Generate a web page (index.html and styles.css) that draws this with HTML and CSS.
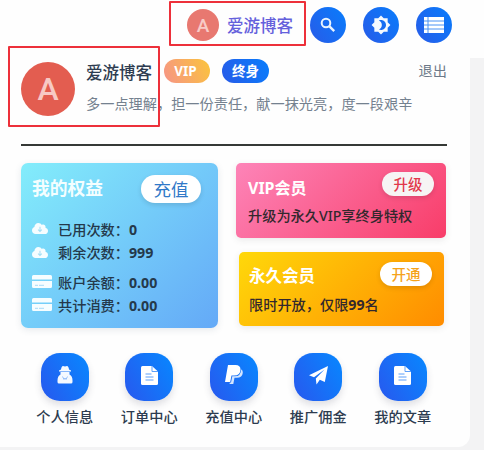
FILE: index.html
```html
<!DOCTYPE html>
<html lang="zh-CN">
<head>
<meta charset="utf-8">
<title>爱游博客</title>
<link rel="stylesheet" href="styles.css">
</head>
<body>
<svg class="defs" width="0" height="0" aria-hidden="true">
  <symbol id="cloud" viewBox="0 0 640 512"><path fill="currentColor" d="M537 227c4-11 7-23 7-35 0-53-43-96-96-96-20 0-38 6-53 16C367 64 315 32 256 32c-88 0-160 72-160 160v8C40 220 0 273 0 336c0 80 64 144 144 144h368c71 0 128-57 128-128 0-62-44-114-103-125z"/><path d="M320 190v180M245 300l75 75 75-75" fill="none" stroke="#a5dff5" stroke-width="42"/></symbol>
  <symbol id="card" viewBox="0 0 20 14"><path fill="currentColor" d="M1.5 0h17Q20 0 20 1.5V4.500H0V1.5Q0 0 1.500 0zM0 6h20v5.500q0 1.500-1.500 1.500h-17Q0 13 0 11.500z"/><path d="M3 10.300h3M7 10.300h5" stroke="#a8daf8" stroke-width="1"/></symbol>
  <symbol id="doc" viewBox="0 0 17 19"><path fill="currentColor" d="M1.500 0H11l6 5.500v12q0 1.500-1.500 1.500h-14Q0 19 0 17.500v-16Q0 0 1.500 0z"/><path d="M11 0v5.500h6M4.500 8h6M4.500 11h8M4.500 14h8" fill="none" stroke="#5c9ffa" stroke-width="1"/></symbol>
</svg>

<header class="topbar">
  <a class="account"><span class="avatar avatar-small">A</span><span class="account-name">爱游博客</span></a>
  <button class="round"><svg width="16" height="16" viewBox="0 0 16 16"><circle cx="6" cy="6" r="4.300" fill="none" stroke="#e9f4ff" stroke-width="2"/><path d="M9.200 9.200l5 5" stroke="#e9f4ff" stroke-width="2.400"/></svg></button>
  <button class="round"><svg width="20" height="20" viewBox="0 0 24 24"><path fill="#f4f9ff" d="M20 8.690V4h-4.690L12 .690 8.690 4H4v4.690L.690 12 4 15.310V20h4.690L12 23.310 15.310 20H20v-4.690L23.310 12zM12 18c-.890 0-1.740-.200-2.500-.550C11.560 16.500 13 14.420 13 12s-1.440-4.500-3.500-5.450C10.260 6.200 11.110 6 12 6c3.310 0 6 2.690 6 6s-2.690 6-6 6z"/></svg></button>
  <button class="round"><svg width="20" height="16" viewBox="0 0 20 16"><path fill="#fff" d="M0 0h20v16H0z"/><path d="M0 4h20M0 8h20M0 12h20M4 0v16" stroke="#4b92f4" stroke-width="1"/></svg></button>
</header>

<main class="panel">
  <section class="profile">
    <span class="avatar avatar-large">A</span>
    <div class="info">
      <div class="identity"><strong class="name">爱游博客</strong><span class="tag tag-vip">VIP</span><span class="tag tag-life">终身</span><a class="logout">退出</a></div>
      <p class="motto">多一点理解，担一份责任，献一抹光亮，度一段艰辛</p>
    </div>
  </section>

  <section class="cards">
    <article class="benefits">
      <div class="card-head"><h2>我的权益</h2><button class="pill recharge">充值</button></div>
      <ul class="stats">
        <li><svg class="cloud"><use href="#cloud"/></svg><span>已用次数：<b>0</b></span></li>
        <li><svg class="cloud"><use href="#cloud"/></svg><span>剩余次数：<b>999</b></span></li>
      </ul>
      <ul class="stats">
        <li><svg class="bank"><use href="#card"/></svg><span>账户余额：<b>0.00</b></span></li>
        <li><svg class="bank"><use href="#card"/></svg><span>共计消费：<b>0.00</b></span></li>
      </ul>
    </article>
    <div class="offers">
      <article class="offer pink">
        <div class="card-head"><h3>VIP会员</h3><button class="pill upgrade">升级</button></div>
        <p>升级为永久VIP享终身特权</p>
      </article>
      <article class="offer gold">
        <div class="card-head"><h3>永久会员</h3><button class="pill open">开通</button></div>
        <p>限时开放，仅限<b>99</b>名</p>
      </article>
    </div>
  </section>

  <nav class="shortcuts">
    <a><span class="tile"><svg width="16" height="18" viewBox="0 0 16 18"><path fill="#f4f9ff" d="M4 3.500Q4.500 0 6 0l2 .600L10 0q1.500 0 2 3.500l2 1v1H2v-1zM3.500 6h9v2.500q3 1.500 3 6V16q0 1.500-1.500 1.500H2Q.500 17.500.500 16v-1.500q0-4.500 3-6z"/><path d="M5.500 10.500l1.500 3 1-1.500 1 1.500 1.500-3" fill="none" stroke="#7eb0f6" stroke-width=".8"/></svg></span>个人信息</a>
    <a><span class="tile"><svg width="17" height="19"><use href="#doc"/></svg></span>订单中心</a>
    <a><span class="tile"><svg width="18" height="20" viewBox="0 0 18 20"><path fill="#fff" d="M3 0h7.500q5 0 5 4.500 0 6-6.500 6H6.500L5.200 17H0z"/><path fill="#d4e6ff" d="M16.300 4.200q1.700 1 1.500 3.500-.500 5-6 5H9.500L8.300 19H4.500l.4-1.500H6L7.300 11.300h2.500q6 0 6.500-7.100z"/></svg></span>充值中心</a>
    <a><span class="tile"><svg width="19" height="19" viewBox="0 0 19 19"><path fill="#fff" d="M19 0l-3.200 16-5-2.200L7.500 18.500 6.800 12.500 15.500 3.500 5 11.300 0 9.300z"/></svg></span>推广佣金</a>
    <a><span class="tile"><svg width="17" height="19"><use href="#doc"/></svg></span>我的文章</a>
  </nav>
</main>
<i class="mark mark-top"></i>
<i class="mark mark-profile"></i>
</body>
</html>
```

FILE: styles.css
```css
* { box-sizing: border-box; }
body {
  margin: 0;
  height: 450px;
  overflow: hidden;
  position: relative;
  background: #f3f3f4;
  font-family: "Noto Sans", "Noto Sans CJK SC", sans-serif;
  font-size: 14.2px;
  color: #2d3c50;
}
.defs { position: absolute; }
h2, h3, p, ul { margin: 0; padding: 0; }
button { border: 0; padding: 0; font-family: inherit; }
svg { flex: none; }

.topbar {
  height: 58px;
  padding: 7px 32px 0 187px;
  display: flex;
  align-items: flex-start;
  background: #fefefe;
}
.account { display: flex; flex: none; align-items: center; height: 36px; width: 123px; gap: 8px; }
.account-name { font-size: 16.5px; font-weight: 500; color: #6460dc; white-space: nowrap; line-height: 24px; padding-top: 2px; }
.avatar {
  display: flex;
  align-items: center;
  justify-content: center;
  flex: none;
  border-radius: 50%;
  font-family: Roboto, sans-serif;
  font-weight: 500;
}
.avatar-small { width: 32px; height: 32px; background: #e87870; color: #f8cbc7; font-size: 19px; }
.avatar-large { width: 54px; height: 54px; background: #e35d50; color: #f7c9c4; font-size: 32px; }
.round {
  width: 36px;
  height: 36px;
  margin-right: 17px;
  border-radius: 50%;
  flex: none;
  display: flex;
  align-items: center;
  justify-content: center;
  background: linear-gradient(55deg, #285be8, #087dfc);
}

.panel {
  width: 470px;
  height: 389px;
  padding: 0 23px 0 21px;
  background: #fefefe;
  border-radius: 0 0 12px 0;
}
.profile { height: 88px; display: flex; gap: 11px; padding-top: 4px; border-bottom: 2px solid #353936; }
.info { flex: 1; margin-top: -3px; }
.identity { display: flex; align-items: center; height: 24px; }
.name { font-size: 16.5px; font-weight: 500; width: 78px; line-height: 24px; padding-top: 4px; white-space: nowrap; }
.tag {
  height: 24px;
  border-radius: 12px;
  color: #fff;
  font-size: 13.500px;
  font-weight: 700;
  line-height: 24px;
  text-align: center;
}
.tag-vip { width: 46px; padding-right: 3px; background: linear-gradient(65deg, #f69487, #fbc43b); }
.tag-life { width: 47px; margin-left: 12px; background: linear-gradient(65deg, #285be8, #087dfc); }
.logout { margin-left: auto; color: #6c7988; line-height: 20px; }
.motto { margin-top: 11px; line-height: 20px; color: #74818f; white-space: nowrap; }

.cards { display: flex; gap: 18px; margin-top: 17px; }
.benefits {
  width: 197px;
  height: 165px;
  border-radius: 7px;
  padding: 12px 17px 0 11px;
  color: #24394b;
  background: linear-gradient(135deg, #83edfb, #64a9f7);
  box-shadow: 0 2px 7px rgba(60, 80, 110, .12);
}
.card-head { display: flex; justify-content: space-between; align-items: flex-start; }
.card-head h2 { font-size: 17.800px; line-height: 26px; font-weight: 700; color: #f4feff; }
.pill { background: #fff; box-shadow: 0 2px 5px rgba(0, 0, 0, .12); text-align: center; }
.recharge { width: 60px; height: 28px; border-radius: 14px; font-size: 17.500px; line-height: 28px; color: #3079c8; }
.stats { list-style: none; margin-top: 14px; font-weight: 500; }
.stats + .stats { margin-top: 6px; }
.stats li { height: 23.500px; display: flex; align-items: center; white-space: nowrap; }
.stats svg { color: #f6fdff; }
.stats .cloud { width: 16px; height: 13px; margin-right: 10px; }
.stats .bank { width: 20px; height: 14px; margin-right: 6px; }
.stats b { font-weight: 700; }

.offers { width: 210px; flex: none; }
.offer { border-radius: 5px; box-shadow: 0 2px 7px rgba(60, 60, 60, .1); }
.offer h3 { font-size: 16px; line-height: 24px; padding-top: 4px; color: #fff; }
.offer p { font-weight: 500; line-height: 20px; color: #33282d; white-space: nowrap; }
.offer .pill { width: 52px; height: 24px; border-radius: 12px; font-size: 14.500px; line-height: 24px; font-weight: 500; }
.pink { height: 75px; padding: 9px 12px 0; background: linear-gradient(135deg, #fd84b8, #f83d69); }
.pink p { margin-top: 6px; }
.gold { width: 205px; height: 74px; margin: 14px 0 0 3px; padding: 10px 12px 0 10px; background: linear-gradient(135deg, #ffd80a, #ff8c00); }
.gold h3 { font-size: 16.500px; padding-top: 2px; }
.gold p { margin-top: 7px; }
.offer .upgrade { background: #f6f4f4; color: #e2384a; }
.offer .open { color: #f5a31b; }

.shortcuts { display: flex; margin: 25px 0 0 1.500px; }
.shortcuts a { width: 84.500px; flex: none; display: flex; flex-direction: column; align-items: center; font-weight: 500; line-height: 20px; }
.tile {
  width: 48px;
  height: 48px;
  margin-bottom: 6px;
  padding-bottom: 4px;
  border-radius: 19px;
  display: flex;
  align-items: center;
  justify-content: center;
  color: #fff;
  background: linear-gradient(60deg, #2858ee, #0788ff);
  box-shadow: 0 4px 7px rgba(60, 60, 90, .16);
}

.mark { position: absolute; border: 2px solid #ed303a; border-radius: 1px; }
.mark-top { left: 169px; top: 1px; width: 137px; height: 45px; }
.mark-profile { left: 8px; top: 46px; width: 152px; height: 81px; }
```
